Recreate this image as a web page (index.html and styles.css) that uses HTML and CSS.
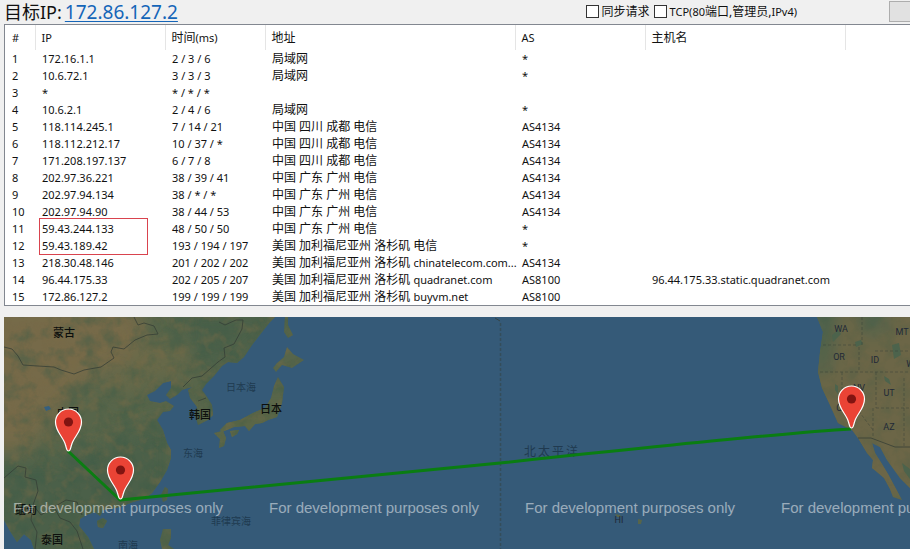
FILE: index.html
```html
<!DOCTYPE html>
<html lang="zh-CN">
<head>
<meta charset="utf-8">
<title>目标IP: 172.86.127.2</title>
<link rel="stylesheet" href="styles.css">
</head>
<body>
<header class="toolbar">
  <h1 class="target"><span>目标IP:</span><a href="#map">172.86.127.2</a></h1>
  <div class="options">
    <label class="option"><input type="checkbox"><span>同步请求</span></label>
    <label class="option"><input type="checkbox"><span><small>TCP(80</small>端口,管理员,<small>IPv4)</small></span></label>
  </div>
  <button class="action" type="button" aria-label="开始"></button>
</header>

<main>
<div class="hops">
<table>
  <colgroup><col class="c-num"><col class="c-ip"><col class="c-time"><col class="c-addr"><col class="c-as"><col class="c-host"><col></colgroup>
  <thead>
    <tr><th>#</th><th>IP</th><th><span class="zh">时间</span>(ms)</th><th class="zh">地址</th><th>AS</th><th class="zh">主机名</th><th></th></tr>
  </thead>
  <tbody>
    <tr><td>1</td><td>172.16.1.1</td><td>2 / 3 / 6</td><td class="zh">局域网</td><td>*</td><td></td><td></td></tr>
    <tr><td>2</td><td>10.6.72.1</td><td>3 / 3 / 3</td><td class="zh">局域网</td><td>*</td><td></td><td></td></tr>
    <tr><td>3</td><td>*</td><td>* / * / *</td><td></td><td></td><td></td><td></td></tr>
    <tr><td>4</td><td>10.6.2.1</td><td>2 / 4 / 6</td><td class="zh">局域网</td><td>*</td><td></td><td></td></tr>
    <tr><td>5</td><td>118.114.245.1</td><td>7 / 14 / 21</td><td class="zh">中国 四川 成都 电信</td><td>AS4134</td><td></td><td></td></tr>
    <tr><td>6</td><td>118.112.212.17</td><td>10 / 37 / *</td><td class="zh">中国 四川 成都 电信</td><td>AS4134</td><td></td><td></td></tr>
    <tr><td>7</td><td>171.208.197.137</td><td>6 / 7 / 8</td><td class="zh">中国 四川 成都 电信</td><td>AS4134</td><td></td><td></td></tr>
    <tr><td>8</td><td>202.97.36.221</td><td>38 / 39 / 41</td><td class="zh">中国 广东 广州 电信</td><td>AS4134</td><td></td><td></td></tr>
    <tr><td>9</td><td>202.97.94.134</td><td>38 / * / *</td><td class="zh">中国 广东 广州 电信</td><td>AS4134</td><td></td><td></td></tr>
    <tr><td>10</td><td>202.97.94.90</td><td>38 / 44 / 53</td><td class="zh">中国 广东 广州 电信</td><td>AS4134</td><td></td><td></td></tr>
    <tr><td>11</td><td class="marked">59.43.244.133</td><td>48 / 50 / 50</td><td class="zh">中国 广东 广州 电信</td><td>*</td><td></td><td></td></tr>
    <tr><td>12</td><td>59.43.189.42</td><td>193 / 194 / 197</td><td class="zh">美国 加利福尼亚州 洛杉矶 电信</td><td>*</td><td></td><td></td></tr>
    <tr><td>13</td><td>218.30.48.146</td><td>201 / 202 / 202</td><td class="zh">美国 加利福尼亚州 洛杉矶 <small>chinatelecom.com...</small></td><td>AS4134</td><td></td><td></td></tr>
    <tr><td>14</td><td>96.44.175.33</td><td>202 / 205 / 207</td><td class="zh">美国 加利福尼亚州 洛杉矶 <small>quadranet.com</small></td><td>AS8100</td><td>96.44.175.33.static.quadranet.com</td><td></td></tr>
    <tr><td>15</td><td>172.86.127.2</td><td>199 / 199 / 199</td><td class="zh">美国 加利福尼亚州 洛杉矶 <small>buyvm.net</small></td><td>AS8100</td><td></td><td></td></tr>
  </tbody>
</table>
</div>

<section class="map" id="map" aria-label="路由地图">
<svg viewBox="4 317 906 232" preserveAspectRatio="xMinYMin slice">
  <defs>
    <clipPath id="land">
      <path d="M4 317H275L270 322L262 332L252 345L244 357L237 363L228 362L222 366L214 376L206 384L202 390L207 397L212 405L213 415L208 420L198 425L195 415L197 407L190 398L188 390L192 387L182 390L177 395L170 399L166 395L171 388L171 381L163 383L155 391L147 395L150 401L160 403L166 401L174 406L170 411L163 412L157 420L163 430L167 443L171 450L171 458L167 470L160 482L152 493L144 499L133 502L120 507L103 510L100 516L95 512L86 515L80 519L79 526L88 537L94 549H34L31 540L24 534L17 542L10 531L4 520Z"/>
      <path d="M285 317H288L288 325L293 335L288 338L284 332ZM287 347L293 354L304 360L292 368L282 365L276 372L273 368L277 363L284 357ZM278 377L284 387L282 403L277 417L268 420L262 423L255 424L249 431L245 426L234 427L222 432L220 430L227 423L240 420L253 413L265 408L271 398L274 386ZM214 433L223 431L226 438L224 446L219 448L220 439ZM230 431L239 430L237 434L232 437Z"/>
      <path d="M165 487L168 489L167 500L163 502L161 495ZM97 521L103 518L107 521L103 528L98 527ZM163 529L171 529L171 538L168 545L174 549H162L160 540Z"/>
      <path d="M817 317L823 332L820 352L818 372L822 388L830 405L834 414L838 423L852 430L858 438L867 453L873 460L872 468L877 472L884 478L890 489L893 497L902 500L895 487L888 474L882 464L875 453L872 443L880 447L887 460L900 478L910 488V317Z"/>
      <path d="M615 514l5 1 1 2-4 0zM638 519l4 1-1 4-3 0z"/>
    </clipPath>
    <filter id="soft" x="-20%" y="-20%" width="140%" height="140%"><feGaussianBlur stdDeviation="9"/></filter>
    <filter id="relief" x="0" y="0" width="100%" height="100%" color-interpolation-filters="sRGB">
      <feTurbulence type="fractalNoise" baseFrequency="0.06" numOctaves="4" seed="8"/>
      <feColorMatrix values="0 0 0 0 .24  0 0 0 0 .36  0 0 0 0 .28  3 0 0 0 -1.3"/>
    </filter>
    <filter id="dust" x="0" y="0" width="100%" height="100%" color-interpolation-filters="sRGB">
      <feTurbulence type="fractalNoise" baseFrequency="0.09" numOctaves="3" seed="21"/>
      <feColorMatrix values="0 0 0 0 .48  0 0 0 0 .42  0 0 0 0 .28  0 3 0 0 -1.4"/>
    </filter>
    <g id="pin">
      <path d="M0 0C-2 0 -2 -3 -3 -6C-5 -14 -13 -19 -13 -29A13 13 0 0 1 13 -29C13 -19 5 -14 3 -6C2 -3 2 0 0 0Z" fill="#ea4335" stroke="#fff" stroke-width="1.2"/>
      <circle cy="-29" r="4.6" fill="#811411"/>
    </g>
  </defs>

  <rect x="4" y="317" width="906" height="232" fill="#355a78"/>

  <g clip-path="url(#land)">
    <rect x="4" y="317" width="906" height="232" fill="#57654a"/>
    <g filter="url(#soft)">
      <path d="M-20 300H130L150 340L120 365L85 385L50 420L30 450H-20Z" fill="#766b49"/>
      <path d="M140 345H190V375L150 380L120 400L110 385Z" fill="#67694a"/>
      <path d="M-20 460H60L170 420V500L90 560H-20Z" fill="#4b6049"/>
      <path d="M180 310H290L230 370L190 360Z" fill="#4c6148"/>
      <path d="M800 300H930V500H800Z" fill="#6c6646"/>
      <path d="M808 300H840L830 370L815 380Z" fill="#4c624b"/>
      <path d="M855 300H885V330L868 340Z" fill="#4c624b"/>
      <path d="M215 400H310V450H215Z" fill="#5a6647"/>
    </g>
    <rect x="4" y="317" width="300" height="232" filter="url(#relief)" opacity=".45"/>
    <rect x="4" y="317" width="300" height="232" filter="url(#dust)" opacity=".4"/>
    <rect x="810" y="317" width="100" height="190" filter="url(#relief)" opacity=".2"/>
    <path d="M832 335l6-5 3 4-8 8zM892 345l7-2 2 12-7 4zM884 376l5 3 2 6-6-4zM835 384l3 2v8l-3-4zM902 463l8 6v10l-6-8zM855 342l6-2 2 4-7 3z" fill="#4c634c"/>
    <path d="M44 407l5-1 2 3-5 2z" fill="#355f7f"/>
  </g>

  <g class="border">
    <path d="M4 347L12 349L18 356L23 365L38 366L54 367L61 370L74 374L84 370L101 367L114 358L111 352L113 347L124 349L135 340L147 335L158 334L154 326L144 323L138 325L134 317"/>
    <path d="M183 387L192 378L202 376L210 369L218 362L225 357L224 348L234 344L242 329L243 320L236 320L225 325L219 322"/>
    <path d="M4 478L18 466L26 468L25 477L36 480L38 491L33 505L41 515L54 507L66 500L77 502L82 515M54 507L60 518L70 522L77 531L83 549M33 505L31 520L37 532L35 549M198 401L206 398"/>
    <path d="M858 438H871L895 447H910"/>
    <path class="state" d="M820 372H910M842 372V389L873 430M859 347V372M876 372V408M904 378V447M876 408H910M873 408V438M862 317V347M875 351H910M823 345H858"/>
    <path class="state" d="M500.500 323V549" stroke-width="1.5"/>
    <path d="M495 318L500 321"/>
  </g>

  <g class="place">
    <text x="64" y="337">蒙古</text><text x="68" y="417">中国</text>
    <text x="26" y="514">缅甸</text><text x="52" y="544">泰国</text>
    <text x="200" y="419">韩国</text><text x="271" y="413">日本</text>
  </g>
  <g class="sea">
    <text x="241" y="391">日本海</text><text x="193" y="457">东海</text>
    <text x="128" y="549">南海</text><text x="231" y="525">菲律宾海</text>
    <text class="ocean" x="552" y="456">北太平洋</text>
  </g>
  <g class="region">
    <text x="841" y="332">WA</text><text x="902" y="335">MT</text><text x="839" y="360">OR</text>
    <text x="875" y="363">ID</text><text x="913" y="367">WY</text><text x="859" y="391">NV</text>
    <text x="889" y="396">UT</text><text x="842" y="411">CA</text><text x="889" y="430">AZ</text>
    <text x="619" y="523">HI</text>
  </g>

  <path class="route" d="M68 451L120 500L500 463Q780 433 851 429"/>
  <g class="notice">
    <text x="13" y="513">For development purposes only</text>
    <text x="269" y="513">For development purposes only</text>
    <text x="525" y="513">For development purposes only</text>
    <text x="781" y="513">For development purposes only</text>
  </g>
  <use href="#pin" x="68.500" y="451"/>
  <use href="#pin" x="120.500" y="499"/>
  <use href="#pin" x="851.500" y="428"/>
</svg>
</section>
</main>
</body>
</html>
```
FILE: styles.css
```css
*,
*::after {
  box-sizing: border-box;
}

body {
  margin: 0;
  min-height: 100vh;
  display: flex;
  flex-direction: column;
  overflow: hidden;
  background: #f0f0f0;
  color: #111;
  font: 11px/17px "Noto Sans", "Noto Sans CJK SC", sans-serif;
}

small {
  font-size: 11px;
}

.toolbar {
  display: flex;
  height: 24px;
  padding-left: 4px;
}

.target {
  flex: 1;
  display: flex;
  gap: 3px;
  margin: 0;
  font-size: 18px;
  line-height: 24px;
  font-weight: 400;
  white-space: nowrap;
}

.target a {
  color: #1565b8;
  font-size: 19px;
  text-decoration-thickness: 1px;
  text-underline-offset: 2px;
}

.options {
  display: flex;
  gap: 4px;
  height: 22px;
  align-items: center;
  margin-right: 92px;
}

.option {
  display: flex;
  align-items: center;
  gap: 3px;
  font-size: 12px;
  white-space: nowrap;
}

.option input {
  appearance: none;
  width: 13px;
  height: 13px;
  margin: 0;
  border: 1px solid #333;
  background: #fff;
}

.action {
  width: 21px;
  height: 21px;
  margin-top: 1px;
  border: 1px solid #adadad;
  border-right: 0;
  background: #e1e1e1;
}

main {
  flex: 1;
  display: flex;
  flex-direction: column;
  gap: 11px;
  padding-left: 4px;
}

.hops {
  border: 1px solid #828790;
  border-right: 0;
  background: #fff;
}

table {
  width: 100%;
  table-layout: fixed;
  border-collapse: collapse;
}

.c-num { width: 30px; }
.c-ip { width: 130px; }
.c-time { width: 100px; }
.c-addr { width: 250px; }
.c-as { width: 130px; }
.c-host { width: 200px; }

th,
td {
  height: 17px;
  padding: 0 0 0 7px;
  line-height: 17px;
  text-align: left;
  font-weight: 400;
  white-space: nowrap;
}

th {
  height: 25px;
  padding-left: 6px;
  border-right: 1px solid #e5e5e5;
}

th:last-child {
  border-right: 0;
}

th:first-child {
  padding-left: 7px;
}

.zh {
  font-size: 12px;
}

.marked {
  position: relative;
}

.marked::after {
  content: "";
  position: absolute;
  top: -2px;
  left: 4px;
  width: 109px;
  height: 37px;
  border: 1px solid #d9434e;
}

.map {
  flex: 1;
  display: flex;
}

.map svg {
  display: block;
  width: 100%;
  min-height: 232px;
}

.border {
  fill: none;
  stroke: #343d35;
  stroke-width: 1;
  opacity: 0.75;
}

.state {
  stroke-dasharray: 3 2;
  opacity: 0.6;
}

.place {
  font-size: 11px;
  font-weight: 500;
  text-anchor: middle;
  fill: #0c0f0d;
}

.sea {
  font-size: 10px;
  text-anchor: middle;
  fill: #203a50;
}

.ocean {
  font-size: 12px;
  letter-spacing: 2px;
}

.region {
  font: 9px Roboto, sans-serif;
  text-anchor: middle;
  fill: #1f2937;
}

.route {
  fill: none;
  stroke: #0a7d12;
  stroke-width: 3;
  stroke-linejoin: round;
}

.notice {
  font: 15px "Liberation Sans", sans-serif;
  fill: #fff;
  fill-opacity: 0.5;
}
```
